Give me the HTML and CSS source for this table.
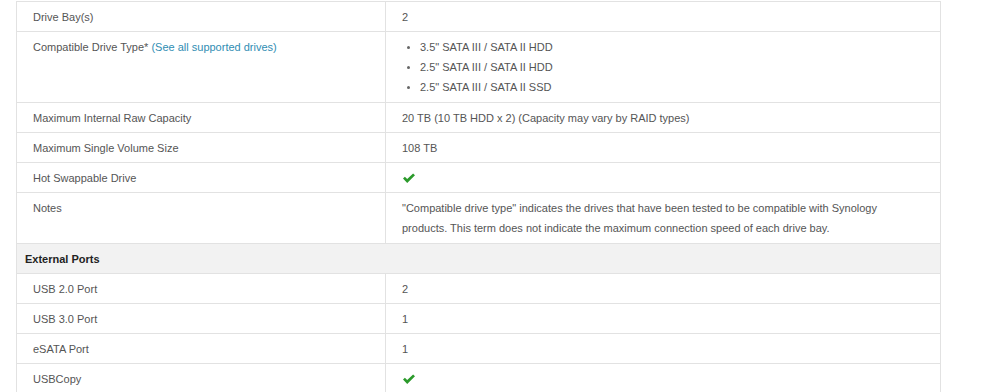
FILE: index.html
```html
<!DOCTYPE html>
<html>
<head>
<meta charset="utf-8">
<link rel="stylesheet" href="styles.css">
</head>
<body>
<table class="spec">
  <colgroup><col class="c-label"><col class="c-value"></colgroup>
  <tbody>
    <tr><td>Drive Bay(s)</td><td>2</td></tr>
    <tr class="multi"><td>Compatible Drive Type* <a href="#" class="link">(See all supported drives)</a></td>
      <td><ul class="bullets"><li>3.5" SATA III / SATA II HDD</li><li>2.5" SATA III / SATA II HDD</li><li>2.5" SATA III / SATA II SSD</li></ul></td></tr>
    <tr><td>Maximum Internal Raw Capacity</td><td>20 TB (10 TB HDD x 2) (Capacity may vary by RAID types)</td></tr>
    <tr><td>Maximum Single Volume Size</td><td>108 TB</td></tr>
    <tr><td>Hot Swappable Drive</td><td><svg class="check" viewBox="0 0 14 11" width="14" height="11"><path d="M1 5.6 L2.9 3.8 L5.2 6.1 L11.1 0.4 L13 2.3 L5.2 10 Z" fill="#2b9a2b"/></svg></td></tr>
    <tr class="multi"><td>Notes</td><td>"Compatible drive type" indicates the drives that have been tested to be compatible with Synology products. This term does not indicate the maximum connection speed of each drive bay.</td></tr>
    <tr class="section"><th colspan="2">External Ports</th></tr>
    <tr><td>USB 2.0 Port</td><td>2</td></tr>
    <tr><td>USB 3.0 Port</td><td>1</td></tr>
    <tr><td>eSATA Port</td><td>1</td></tr>
    <tr><td>USBCopy</td><td><svg class="check" viewBox="0 0 14 11" width="14" height="11"><path d="M1 5.6 L2.9 3.8 L5.2 6.1 L11.1 0.4 L13 2.3 L5.2 10 Z" fill="#2b9a2b"/></svg></td></tr>
  </tbody>
</table>
</body>
</html>
```

FILE: styles.css
```css
html, body {
  margin: 0;
  padding: 0;
  background: #ffffff;
}
body {
  font-family: "Liberation Sans", Arial, sans-serif;
  font-size: 11px;
  color: #555555;
  overflow: hidden;
}
.spec {
  margin: 1px 0 0 16px;
  width: 925px;
  border-collapse: collapse;
  table-layout: fixed;
  border: 1px solid #e2e2e2;
}
.c-label { width: 369px; }
.spec td {
  padding: 5px 16px 4px;
  line-height: 20px;
  vertical-align: top;
  border-top: 1px solid #e2e2e2;
  border-bottom: 1px solid #e2e2e2;
}
.spec td + td {
  border-left: 1px solid #e2e2e2;
}
.spec tr.multi td {
  padding-bottom: 5px;
}
.section th {
  text-align: left;
  font-weight: bold;
  color: #222222;
  background: #f2f2f2;
  padding: 5px 8px 4px;
  line-height: 20px;
  border-top: 1px solid #e2e2e2;
  border-bottom: 1px solid #e2e2e2;
}
.link {
  color: #2f8db3;
  text-decoration: none;
}
.bullets {
  list-style: none;
  margin: 0;
  padding: 0;
}
.bullets li {
  position: relative;
  padding-left: 18px;
}
.bullets li::before {
  content: "";
  position: absolute;
  left: 5px;
  top: 9px;
  width: 3px;
  height: 3px;
  border-radius: 50%;
  background: #666666;
}
.check {
  display: block;
  margin-top: 5px;
}
```
